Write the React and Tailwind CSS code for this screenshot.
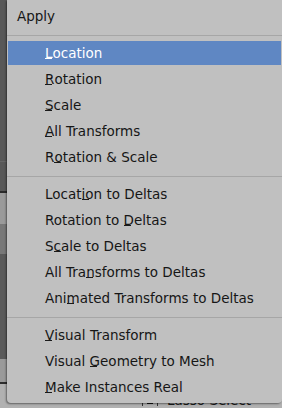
import React from "react";

const groups = [
  [
    { label: "Location", key: 0, active: true },
    { label: "Rotation", key: 0 },
    { label: "Scale", key: 0 },
    { label: "All Transforms", key: 0 },
    { label: "Rotation & Scale", key: 1 },
  ],
  [
    { label: "Location to Deltas", key: 5 },
    { label: "Rotation to Deltas", key: 12 },
    { label: "Scale to Deltas", key: 1 },
    { label: "All Transforms to Deltas", key: 7 },
    { label: "Animated Transforms to Deltas", key: 3 },
  ],
  [
    { label: "Visual Transform", key: 0 },
    { label: "Visual Geometry to Mesh", key: 7 },
    { label: "Make Instances Real", key: 0 },
  ],
];

function Label({ text, at, active }) {
  return (
    <span className="whitespace-pre">
      {text.slice(0, at)}
      <span className="relative inline-block">
        {text[at]}
        <span
          className={`absolute left-0 top-[15px] h-px w-[7px] ${
            active ? "bg-white" : "bg-[#1a1a1a]"
          }`}
        />
      </span>
      {text.slice(at + 1)}
    </span>
  );
}

function Separator() {
  return (
    <div className="h-[11px] pt-[6px]">
      <div className="h-px bg-[#a6a6a6]" />
    </div>
  );
}

function Item({ item }) {
  return (
    <div className="h-[26px] py-px px-px">
      <div
        className={`h-full flex items-center pl-[37px] ${
          item.active ? "bg-[#5f87c3] text-white" : "text-[#161616]"
        }`}
      >
        <Label text={item.label} at={item.key} active={item.active} />
      </div>
    </div>
  );
}

export default function App() {
  return (
    <div
      className="relative w-[282px] h-[408px] overflow-hidden bg-[#595959] flex flex-col"
      style={{ fontFamily: '"DejaVu Sans", sans-serif' }}
    >
      {/* viewport behind the menu */}
      <div className="h-[166px] bg-[#585858]" />
      <div className="h-px bg-[#666666]" />
      <div className="h-[30px] bg-[#585858]" />
      <div className="h-[2px] bg-[#2a2a2a]" />
      <div className="h-[32px] bg-[#9a9a9a]" />
      <div className="h-[31px] bg-[#787878]" />
      <div className="h-[108px] bg-[#5a5a5a]" />
      <div className="h-[23px] bg-[#9a9a9a]" />
      <div className="h-[3px] bg-[#2e2e2e]" />
      <div className="flex-1 bg-[#b1b1b1] flex items-start pl-[142px] text-[13.5px] leading-none text-[#1a1a1a]">
        <span className="mt-[10px] flex items-center gap-[4px]">
          <span className="w-px h-[10px] bg-[#333]" />
          <span className="w-[6px] h-[6px] bg-[#111]" />
          <span className="w-px h-[10px] bg-[#333]" />
          <span className="ml-[5px]">Lasso Select</span>
        </span>
      </div>

      {/* popup menu */}
      <div className="absolute left-[7px] right-0 top-0 h-[403px] bg-[#c0c0c0] rounded-b-[4px] shadow-[-1px_1px_2px_rgba(0,0,0,0.45)] text-[13.5px]">
        <div className="h-[29px] flex items-center pl-[10px] pt-[3px] text-[#161616]">
          Apply
        </div>
        <Separator />
        {groups.map((g, gi) => (
          <div key={gi}>
            {gi > 0 && <Separator />}
            {g.map((item) => (
              <Item key={item.label} item={item} />
            ))}
          </div>
        ))}
      </div>
    </div>
  );
}
